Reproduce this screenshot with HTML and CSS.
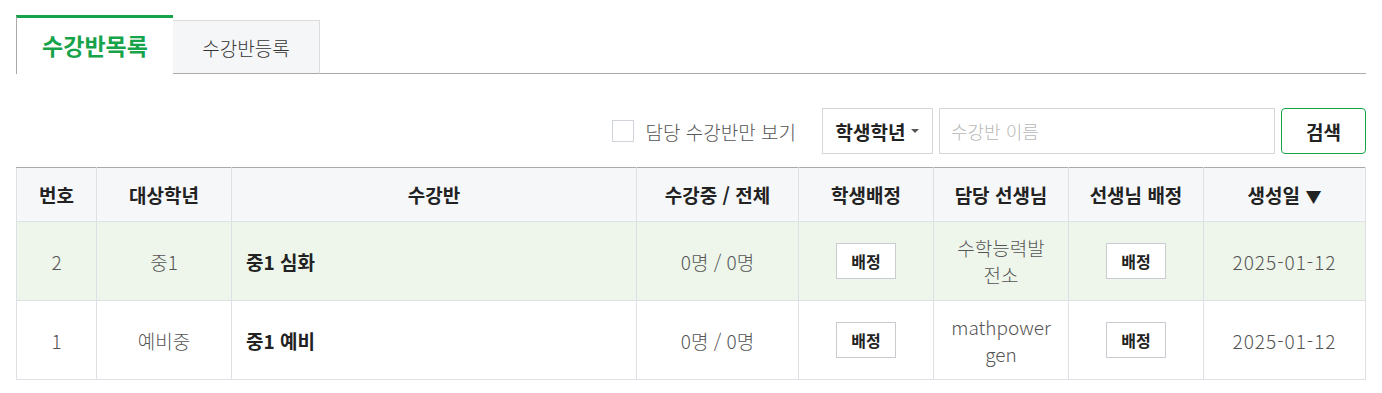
FILE: index.html
```html
<!DOCTYPE html>
<html lang="ko">
<head>
<meta charset="utf-8">
<link rel="stylesheet" href="styles.css">
</head>
<body>
<div class="page">
  <div class="tabs">
    <div class="tab active">수강반목록</div>
    <div class="tab">수강반등록</div>
    <div class="tab-fill"></div>
  </div>
  <div class="toolbar">
    <label class="check"><span class="box"></span><span>담당 수강반만 보기</span></label>
    <div class="select">학생학년 <span class="caret"></span></div>
    <input class="search" type="text" placeholder="수강반 이름">
    <button class="btn-search">검색</button>
  </div>
  <table class="grid">
    <colgroup>
      <col class="c80"><col class="c135"><col class="c405"><col class="c162"><col class="c135"><col class="c135"><col class="c135"><col class="c162">
    </colgroup>
    <thead>
      <tr><th>번호</th><th>대상학년</th><th>수강반</th><th>수강중 / 전체</th><th>학생배정</th><th>담당 선생님</th><th>선생님 배정</th><th>생성일 <span class="sort">▼</span></th></tr>
    </thead>
    <tbody>
      <tr class="hl"><td>2</td><td>중1</td><td class="name">중1 심화</td><td>0명 / 0명</td><td><button class="assign">배정</button></td><td class="teacher">수학능력발전소</td><td><button class="assign">배정</button></td><td class="date">2025-01-12</td></tr>
      <tr><td>1</td><td>예비중</td><td class="name">중1 예비</td><td>0명 / 0명</td><td><button class="assign">배정</button></td><td class="teacher">mathpowergen</td><td><button class="assign">배정</button></td><td class="date">2025-01-12</td></tr>
    </tbody>
  </table>
</div>
</body>
</html>
```
FILE: styles.css
```css
* { box-sizing: border-box; }
body {
  margin: 0;
  background: #fff;
  font-family: "Noto Sans CJK KR", "Noto Sans", sans-serif;
  color: #333;
}
.page { padding: 15px 16px 0 16px; }
.tabs { display: flex; align-items: flex-end; height: 59px; }
.tab {
  height: 54px;
  width: 147px;
  display: flex; align-items: center; justify-content: center;
  font-size: 19px;
  font-weight: 300;
  color: #333;
  background: #f5f6f7;
  border: 1px solid #dcdcdc;
  border-bottom: 1px solid #aaa;
  border-left: none;
}
.tab.active {
  height: 59px;
  width: 157px;
  background: #fff;
  color: #17a34a;
  font-weight: 700;
  font-size: 23px;
  border: none;
  border-top: 3px solid #17a34a;
  border-left: 1px solid #aaa;
  border-bottom: none;
  padding-bottom: 2px;
}
.tab-fill { flex: 1; border-bottom: 1px solid #aaa; height: 1px; }
.toolbar {
  display: flex; align-items: center; justify-content: flex-end;
  margin-top: 34px; height: 46px;
}
.check { display: flex; align-items: center; font-size: 19px; color: #555; font-weight: 300; margin-right: 26px; }
.box { width: 22px; height: 22px; border: 1px solid #cfd4da; background: #fff; margin-right: 12px; }
.select {
  width: 111px; height: 46px; border: 1px solid #d6d6d6;
  display: flex; align-items: center; justify-content: center;
  font-weight: 700; font-size: 19px; color: #222; gap: 6px;
}
.caret { width: 0; height: 0; border-left: 4px solid transparent; border-right: 4px solid transparent; border-top: 4px solid #555; }
.search {
  width: 336px; height: 46px; margin-left: 6px;
  border: 1px solid #d6d6d6; padding: 0 11px;
  font-family: inherit; font-size: 18px; outline: none;
}
.search::placeholder { color: #b8b8b8; font-weight: 300; }
.btn-search {
  width: 85px; height: 46px; margin-left: 6px;
  border: 1px solid #17a34a; border-radius: 4px; background: #fff;
  font-family: inherit; font-weight: 700; font-size: 19px; color: #222;
}
.grid {
  width: 1350px; margin-top: 13px;
  border-collapse: collapse; table-layout: fixed;
  border-top: 1px solid #aaa;
  border-bottom: 1px solid #dde1e5;
  font-size: 19px;
}
.c80 { width: 80px; }
.c135 { width: 135px; }
.c405 { width: 405px; }
.c162 { width: 162px; }
.grid th, .grid td { border: 1px solid #dde1e5; text-align: center; }
.grid th {
  height: 54px; background: #f5f7f9; font-weight: 700; color: #222;
  border-top: 1px solid #aaa;
}
.grid td { height: 79px; color: #555; font-weight: 300; padding: 0 17px; line-height: 27px; }
.grid td.teacher { overflow-wrap: anywhere; word-break: break-all; }
.grid td.date { letter-spacing: 1px; }
.grid tr.hl td { background: #eef6eb; }
.grid td.name { text-align: left; font-weight: 700; color: #222; padding-left: 14px; }
.sort { font-size: 16px; }
.assign {
  width: 60px; height: 36px; background: #fff; border: 1px solid #c8ccd0;
  font-family: inherit; font-weight: 700; font-size: 16px; color: #222;
}
```
